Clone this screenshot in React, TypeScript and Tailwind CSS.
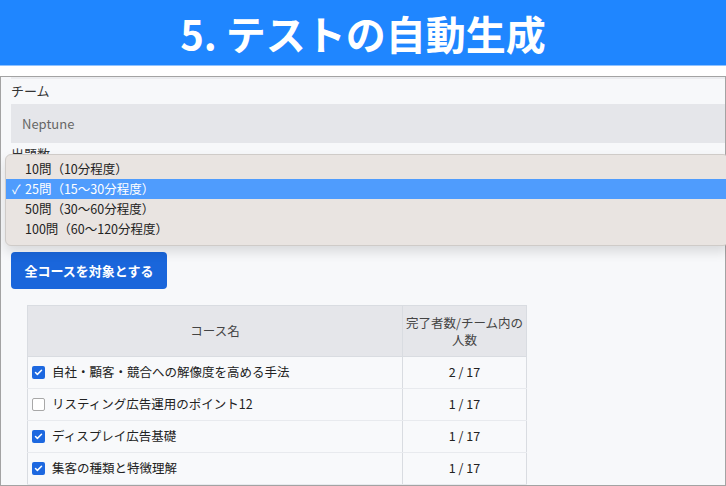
import { Check } from 'lucide-react';

const options = [
  { label: '10問（10分程度）', selected: false },
  { label: '25問（15〜30分程度）', selected: true },
  { label: '50問（30〜60分程度）', selected: false },
  { label: '100問（60〜120分程度）', selected: false },
];

const courses = [
  { name: '自社・顧客・競合への解像度を高める手法', checked: true, done: '2 / 17' },
  { name: 'リスティング広告運用のポイント12', checked: false, done: '1 / 17' },
  { name: 'ディスプレイ広告基礎', checked: true, done: '1 / 17' },
  { name: '集客の種類と特徴理解', checked: true, done: '1 / 17' },
];

function Checkbox({ checked }: { checked: boolean }) {
  if (checked) {
    return (
      <span className="flex h-[13px] w-[13px] shrink-0 items-center justify-center rounded-[2px] bg-[#1d68e0]">
        <Check className="h-[9px] w-[9px] text-white" strokeWidth={4} />
      </span>
    );
  }
  return <span className="h-[13px] w-[13px] shrink-0 rounded-[2px] border border-[#a8a8a8] bg-white" />;
}

export default function App() {
  return (
    <div
      className="h-[486px] w-[726px] overflow-hidden bg-white text-[#222]"
      style={{ fontFamily: '"Noto Sans CJK JP", "Liberation Sans", sans-serif' }}
    >
      <header className="flex h-[66px] items-center justify-center border-b border-[#8fc2ff] bg-[#1f86ff]">
        <h1 className="text-[40px] font-bold leading-none text-white">5. テストの自動生成</h1>
      </header>

      <div className="relative mt-[10px] h-[410px] border border-[#a3a3a3] bg-[#f7f8fa]">
        <div className="ml-[10px] h-[2px] bg-[#ebecef]" />
        <div className="px-[10px]">
          <div className="h-[25px] pt-[3px] text-[13px] leading-[18px] text-[#333]">チーム</div>
          <div className="-mr-[10px] flex h-[39px] items-center bg-[#e5e6ea] px-[11px] text-[13px] text-[#666]">
            Neptune
          </div>
          <div className="h-[20px] pt-[3px] text-[13px] leading-[16px] text-[#333]">出題数</div>
          <div className="-mr-[10px] h-[40px] bg-[#e5e6ea]" />

          <button className="mt-[49px] h-[37px] w-[156px] rounded-[4px] bg-[#1a66db] text-[13px] font-bold text-white">
            全コースを対象とする
          </button>

          <table className="ml-[16px] mt-[16px] w-[500px] border-collapse text-[12.5px]">
            <thead>
              <tr className="h-[51px] bg-[#e5e6ea] text-[#444]">
                <th className="w-[375px] border border-[#d9dce1] font-normal">コース名</th>
                <th className="border border-[#d9dce1] px-0 font-normal leading-[17px]">
                  <span className="whitespace-nowrap">完了者数/チーム内の</span>
                  <br />
                  人数
                </th>
              </tr>
            </thead>
            <tbody>
              {courses.map((c) => (
                <tr key={c.name} className="h-[32px] bg-[#f8f9fb]">
                  <td className="border-x border-b border-x-[#d9dce1] border-b-[#e8eaee] pl-[4px]">
                    <div className="flex items-center gap-[7px]">
                      <Checkbox checked={c.checked} />
                      <span>{c.name}</span>
                    </div>
                  </td>
                  <td className="border-x border-b border-x-[#d9dce1] border-b-[#e8eaee] text-center">{c.done}</td>
                </tr>
              ))}
            </tbody>
          </table>
        </div>

        <div className="absolute left-[4px] top-[77px] -right-[4px] rounded-[6px] border border-[#cfcbc8] bg-[#e9e4e1] pb-[6px] pt-[4px] shadow-[0_6px_12px_rgba(0,0,0,0.12)]">
          {options.map((o) =>
            o.selected ? (
              <div
                key={o.label}
                className="flex h-[20px] items-center bg-[#4f9cfd] pl-[6px] text-[12.5px] text-white"
              >
                <span className="w-[13px]">✓</span>
                <span>{o.label}</span>
              </div>
            ) : (
              <div key={o.label} className="flex h-[20px] items-center pl-[19px] text-[12.5px] text-[#222]">
                {o.label}
              </div>
            )
          )}
        </div>
      </div>
    </div>
  );
}
